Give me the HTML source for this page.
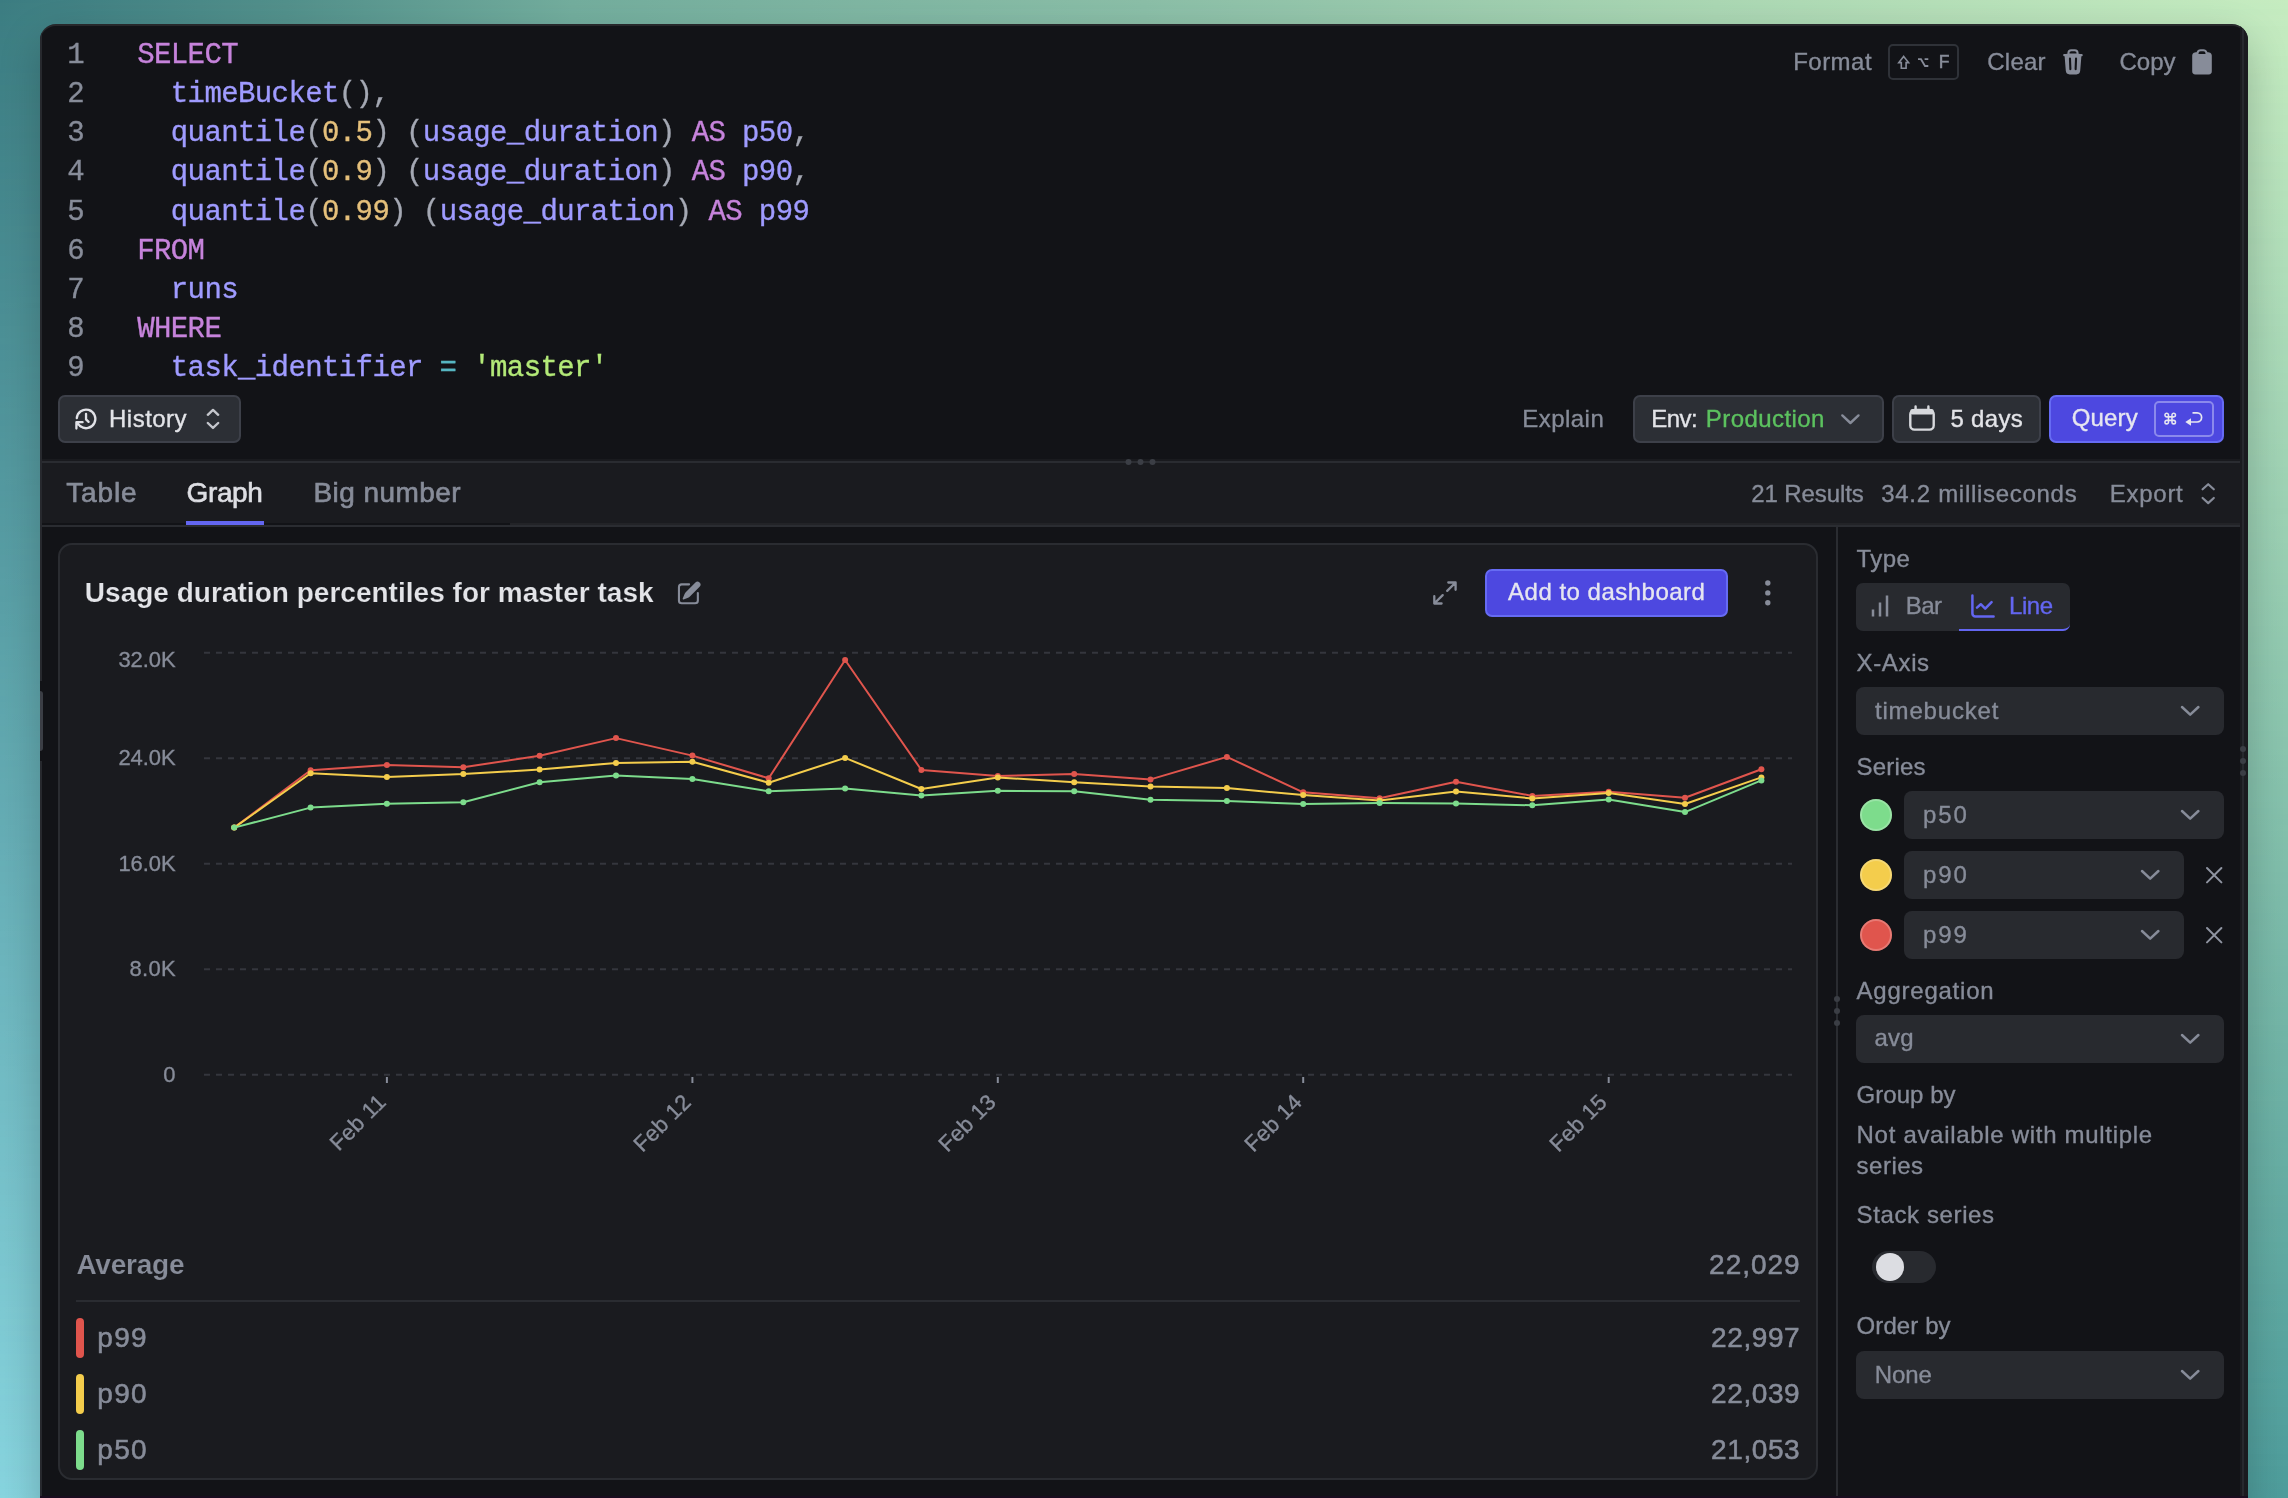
<!DOCTYPE html>
<html><head><meta charset="utf-8"><title>Query</title>
<style>
html,body{margin:0;padding:0}
body{width:2288px;height:1498px;overflow:hidden;position:relative;font-family:'Liberation Sans', sans-serif;background:linear-gradient(to right,#88d5df,#4e9d9c)}
.bgtop{position:absolute;left:0;top:0;width:2288px;height:1498px;background:linear-gradient(to right,#3b7c81,#52908b 12.5%,#73ad9d 25%,#8bbea7 50%,#abd7b3 75%,#c6ecc0);-webkit-mask-image:linear-gradient(to bottom,#000,transparent);mask-image:linear-gradient(to bottom,#000,transparent)}
.win{position:absolute;left:40px;top:24px;width:2208px;height:1500px;background:#121317;border-radius:16px;box-shadow:0 16px 40px rgba(0,0,0,0.22), inset 0 2px 0 rgba(255,255,255,0.09)}
.clip{position:absolute;left:40px;top:24px;width:2208px;height:1474px;border-radius:16px 16px 0 0;overflow:hidden}
.inner{position:absolute;left:-40px;top:-24px;width:2288px;height:1498px;will-change:transform}
.cl{position:absolute;font-family:'Liberation Mono', monospace;font-size:29px;line-height:29px;white-space:pre}
svg{position:absolute;left:0;top:0}
.inner div{-webkit-text-stroke:0.35px currentColor}
</style></head><body>
<div class="bgtop"></div>
<div class="win"></div>
<div class="clip"><div class="inner">
<div style="position:absolute;left:40px;top:24px;width:2px;height:1474px;background:#27292e"></div>
<div style="position:absolute;left:40px;top:681px;width:3px;height:80px;background:#121317"></div>
<div style="position:absolute;left:40px;top:691px;width:3px;height:60px;background:#3b3e45;border-radius:0 3px 3px 0"></div>
<div style="position:absolute;left:2240px;top:24px;width:8px;height:1474px;background:#1a1b1f"></div>
<div style="position:absolute;left:2242px;top:24px;width:2px;height:1474px;background:#27292e"></div>
<div style="position:absolute;left:1888px;top:44px;width:71px;height:36px;border:2px solid #2f3238;border-radius:5px;box-sizing:border-box"></div>
<div style="position:absolute;left:58px;top:395px;width:183px;height:48px;background:#2c2f35;border:2px solid #3d4049;border-radius:7px;box-sizing:border-box"></div>
<div style="position:absolute;left:1633px;top:395px;width:251px;height:48px;background:#2c2f35;border:2px solid #3d4049;border-radius:7px;box-sizing:border-box"></div>
<div style="position:absolute;left:1892px;top:395px;width:149px;height:48px;background:#2c2f35;border:2px solid #3d4049;border-radius:7px;box-sizing:border-box"></div>
<div style="position:absolute;left:2049px;top:395px;width:175px;height:48px;background:#4d48e0;border:2px solid #666bf3;border-radius:7px;box-sizing:border-box"></div>
<div style="position:absolute;left:2154px;top:401px;width:60px;height:36px;border:2px solid #8b89ec;border-radius:5px;box-sizing:border-box"></div>
<div style="position:absolute;left:42px;top:459px;width:2198px;height:2px;background:#191a1e"></div>
<div style="position:absolute;left:42px;top:461px;width:2198px;height:2px;background:#2a2c31"></div>
<div style="position:absolute;left:42px;top:463px;width:2198px;height:60px;background:#1a1b1f"></div>
<div style="position:absolute;left:42px;top:525px;width:2198px;height:2px;background:#2a2c31"></div>
<div style="position:absolute;left:510px;top:523px;width:1730px;height:2px;background:#222327"></div>
<div style="position:absolute;left:186px;top:521px;width:78px;height:4px;background:#6366f1"></div>
<div style="position:absolute;left:58px;top:543px;width:1760px;height:937px;background:#1a1b1f;border:2px solid #2a2c31;border-radius:14px;box-sizing:border-box"></div>
<div style="position:absolute;left:1485px;top:569px;width:243px;height:48px;background:#4d48e0;border:2px solid #666bf3;border-radius:7px;box-sizing:border-box"></div>
<div style="position:absolute;left:76px;top:1300px;width:1724px;height:2px;background:#2a2c31"></div>
<div style="position:absolute;left:76px;top:1318px;width:8px;height:40px;background:#e0554d;border-radius:4px"></div>
<div style="position:absolute;left:76px;top:1374px;width:8px;height:40px;background:#f4cd4c;border-radius:4px"></div>
<div style="position:absolute;left:76px;top:1430px;width:8px;height:40px;background:#7ddc8c;border-radius:4px"></div>
<div style="position:absolute;left:1836px;top:527px;width:2px;height:971px;background:#2a2c31"></div>
<div style="position:absolute;left:1856px;top:583px;width:214px;height:48px;background:#282a2f;border-radius:7px"></div>
<div style="position:absolute;left:1959px;top:583px;width:111px;height:48px;border-bottom:2px solid #6366f1;border-radius:0 0 7px 0;box-sizing:border-box"></div>
<div style="position:absolute;left:1856px;top:687px;width:368px;height:48px;background:#282a2f;border-radius:8px"></div>
<div style="position:absolute;left:1860px;top:799px;width:32px;height:32px;background:#7ddc8c;border-radius:50%;box-shadow:inset 0 0 0 2px rgba(255,255,255,0.22)"></div>
<div style="position:absolute;left:1904px;top:791px;width:320px;height:48px;background:#282a2f;border-radius:8px"></div>
<div style="position:absolute;left:1860px;top:859px;width:32px;height:32px;background:#f4cd4c;border-radius:50%;box-shadow:inset 0 0 0 2px rgba(255,255,255,0.22)"></div>
<div style="position:absolute;left:1904px;top:851px;width:280px;height:48px;background:#282a2f;border-radius:8px"></div>
<div style="position:absolute;left:1860px;top:919px;width:32px;height:32px;background:#e0554d;border-radius:50%;box-shadow:inset 0 0 0 2px rgba(255,255,255,0.22)"></div>
<div style="position:absolute;left:1904px;top:911px;width:280px;height:48px;background:#282a2f;border-radius:8px"></div>
<div style="position:absolute;left:1856px;top:1015px;width:368px;height:48px;background:#282a2f;border-radius:8px"></div>
<div style="position:absolute;left:1872px;top:1251px;width:64px;height:32px;background:#282a2f;border-radius:16px"></div>
<div style="position:absolute;left:1876px;top:1253px;width:28px;height:28px;background:#dcdde2;border-radius:50%"></div>
<div style="position:absolute;left:1856px;top:1351px;width:368px;height:48px;background:#282a2f;border-radius:8px"></div>
<div class="cl" style="top:40.87px;left:137.2px;letter-spacing:-0.603px"><span style="color:#c683db">SELECT</span></div>
<div class="cl" style="top:40.87px;left:67.2px;letter-spacing:-0.603px;color:#878c99">1</div>
<div class="cl" style="top:80.07px;left:137.2px;letter-spacing:-0.603px"><span style="color:#fff">  </span><span style="color:#9f9bff">timeBucket</span><span style="color:#a4a8b3">(),</span></div>
<div class="cl" style="top:80.07px;left:67.2px;letter-spacing:-0.603px;color:#878c99">2</div>
<div class="cl" style="top:119.27px;left:137.2px;letter-spacing:-0.603px"><span style="color:#fff">  </span><span style="color:#9f9bff">quantile</span><span style="color:#a4a8b3">(</span><span style="color:#e5c07b">0.5</span><span style="color:#a4a8b3">) (</span><span style="color:#9f9bff">usage_duration</span><span style="color:#a4a8b3">) </span><span style="color:#c683db">AS</span><span style="color:#fff"> </span><span style="color:#9f9bff">p50</span><span style="color:#a4a8b3">,</span></div>
<div class="cl" style="top:119.27px;left:67.2px;letter-spacing:-0.603px;color:#878c99">3</div>
<div class="cl" style="top:158.47px;left:137.2px;letter-spacing:-0.603px"><span style="color:#fff">  </span><span style="color:#9f9bff">quantile</span><span style="color:#a4a8b3">(</span><span style="color:#e5c07b">0.9</span><span style="color:#a4a8b3">) (</span><span style="color:#9f9bff">usage_duration</span><span style="color:#a4a8b3">) </span><span style="color:#c683db">AS</span><span style="color:#fff"> </span><span style="color:#9f9bff">p90</span><span style="color:#a4a8b3">,</span></div>
<div class="cl" style="top:158.47px;left:67.2px;letter-spacing:-0.603px;color:#878c99">4</div>
<div class="cl" style="top:197.67px;left:137.2px;letter-spacing:-0.603px"><span style="color:#fff">  </span><span style="color:#9f9bff">quantile</span><span style="color:#a4a8b3">(</span><span style="color:#e5c07b">0.99</span><span style="color:#a4a8b3">) (</span><span style="color:#9f9bff">usage_duration</span><span style="color:#a4a8b3">) </span><span style="color:#c683db">AS</span><span style="color:#fff"> </span><span style="color:#9f9bff">p99</span></div>
<div class="cl" style="top:197.67px;left:67.2px;letter-spacing:-0.603px;color:#878c99">5</div>
<div class="cl" style="top:236.87px;left:137.2px;letter-spacing:-0.603px"><span style="color:#c683db">FROM</span></div>
<div class="cl" style="top:236.87px;left:67.2px;letter-spacing:-0.603px;color:#878c99">6</div>
<div class="cl" style="top:276.07px;left:137.2px;letter-spacing:-0.603px"><span style="color:#fff">  </span><span style="color:#9f9bff">runs</span></div>
<div class="cl" style="top:276.07px;left:67.2px;letter-spacing:-0.603px;color:#878c99">7</div>
<div class="cl" style="top:315.27px;left:137.2px;letter-spacing:-0.603px"><span style="color:#c683db">WHERE</span></div>
<div class="cl" style="top:315.27px;left:67.2px;letter-spacing:-0.603px;color:#878c99">8</div>
<div class="cl" style="top:354.47px;left:137.2px;letter-spacing:-0.603px"><span style="color:#fff">  </span><span style="color:#9f9bff">task_identifier</span><span style="color:#fff"> </span><span style="color:#56b6c2">=</span><span style="color:#fff"> </span><span style="color:#b3e978">&#x27;</span><span style="color:#b3e978">master</span><span style="color:#b3e978">&#x27;</span></div>
<div class="cl" style="top:354.47px;left:67.2px;letter-spacing:-0.603px;color:#878c99">9</div>
<div style="position:absolute;top:49.68px;font-family:'Liberation Sans', sans-serif;font-size:24px;font-weight:400;line-height:24px;color:#878c99;white-space:nowrap;letter-spacing:0.477px;left:1793.20px">Format</div>
<div style="position:absolute;top:49.68px;font-family:'Liberation Sans', sans-serif;font-size:24px;font-weight:400;line-height:24px;color:#878c99;white-space:nowrap;letter-spacing:0.235px;left:1987.30px">Clear</div>
<div style="position:absolute;top:49.68px;font-family:'Liberation Sans', sans-serif;font-size:24px;font-weight:400;line-height:24px;color:#878c99;white-space:nowrap;letter-spacing:-0.010px;left:2119.50px">Copy</div>
<div style="position:absolute;top:53.47px;font-family:'Liberation Mono', monospace;font-size:20px;font-weight:400;line-height:20px;color:#878c99;white-space:nowrap;letter-spacing:0.000px;left:1938.30px">F</div>
<div style="position:absolute;top:406.88px;font-family:'Liberation Sans', sans-serif;font-size:24px;font-weight:400;line-height:24px;color:#e3e4e8;white-space:nowrap;letter-spacing:0.488px;left:109.00px">History</div>
<div style="position:absolute;top:406.88px;font-family:'Liberation Sans', sans-serif;font-size:24px;font-weight:400;line-height:24px;color:#878c99;white-space:nowrap;letter-spacing:0.480px;left:1522.20px">Explain</div>
<div style="position:absolute;top:406.88px;font-family:'Liberation Sans', sans-serif;font-size:24px;font-weight:400;line-height:24px;color:#e3e4e8;white-space:nowrap;letter-spacing:-0.544px;left:1651.20px">Env:</div>
<div style="position:absolute;top:406.88px;font-family:'Liberation Sans', sans-serif;font-size:24px;font-weight:400;line-height:24px;color:#5cc25f;white-space:nowrap;letter-spacing:0.428px;left:1705.80px">Production</div>
<div style="position:absolute;top:406.88px;font-family:'Liberation Sans', sans-serif;font-size:24px;font-weight:400;line-height:24px;color:#e3e4e8;white-space:nowrap;letter-spacing:0.296px;left:1950.50px">5 days</div>
<div style="position:absolute;top:406.28px;font-family:'Liberation Sans', sans-serif;font-size:24px;font-weight:400;line-height:24px;color:#e6e6f0;white-space:nowrap;letter-spacing:0.160px;left:2071.70px">Query</div>
<div style="position:absolute;top:479.30px;font-family:'Liberation Sans', sans-serif;font-size:28px;font-weight:400;line-height:28px;color:#878c99;white-space:nowrap;letter-spacing:0.866px;-webkit-text-stroke:0.65px currentColor;left:66.20px">Table</div>
<div style="position:absolute;top:479.30px;font-family:'Liberation Sans', sans-serif;font-size:28px;font-weight:400;line-height:28px;color:#dddee3;white-space:nowrap;letter-spacing:-0.407px;-webkit-text-stroke:0.65px currentColor;left:186.60px">Graph</div>
<div style="position:absolute;top:479.30px;font-family:'Liberation Sans', sans-serif;font-size:28px;font-weight:400;line-height:28px;color:#878c99;white-space:nowrap;letter-spacing:0.446px;-webkit-text-stroke:0.65px currentColor;left:313.40px">Big number</div>
<div style="position:absolute;top:482.18px;font-family:'Liberation Sans', sans-serif;font-size:24px;font-weight:400;line-height:24px;color:#878c99;white-space:nowrap;letter-spacing:-0.099px;left:1751.30px">21 Results</div>
<div style="position:absolute;top:482.18px;font-family:'Liberation Sans', sans-serif;font-size:24px;font-weight:400;line-height:24px;color:#878c99;white-space:nowrap;letter-spacing:0.713px;left:1881.20px">34.2 milliseconds</div>
<div style="position:absolute;top:482.18px;font-family:'Liberation Sans', sans-serif;font-size:24px;font-weight:400;line-height:24px;color:#878c99;white-space:nowrap;letter-spacing:0.725px;left:2109.80px">Export</div>
<div style="position:absolute;top:579.30px;font-family:'Liberation Sans', sans-serif;font-size:28px;font-weight:700;line-height:28px;color:#e3e4e8;white-space:nowrap;letter-spacing:0.020px;-webkit-text-stroke:0.18px #1a1b1f;left:84.80px">Usage duration percentiles for master task</div>
<div style="position:absolute;top:580.48px;font-family:'Liberation Sans', sans-serif;font-size:24px;font-weight:400;line-height:24px;color:#e6e6f0;white-space:nowrap;letter-spacing:0.488px;left:1508.10px">Add to dashboard</div>
<div style="position:absolute;top:648.98px;font-family:'Liberation Sans', sans-serif;font-size:22px;font-weight:400;line-height:22px;color:#878c99;white-space:nowrap;letter-spacing:-0.075px;right:2112.47px">32.0K</div>
<div style="position:absolute;top:747.48px;font-family:'Liberation Sans', sans-serif;font-size:22px;font-weight:400;line-height:22px;color:#878c99;white-space:nowrap;letter-spacing:-0.075px;right:2112.47px">24.0K</div>
<div style="position:absolute;top:852.98px;font-family:'Liberation Sans', sans-serif;font-size:22px;font-weight:400;line-height:22px;color:#878c99;white-space:nowrap;letter-spacing:-0.075px;right:2112.47px">16.0K</div>
<div style="position:absolute;top:958.48px;font-family:'Liberation Sans', sans-serif;font-size:22px;font-weight:400;line-height:22px;color:#878c99;white-space:nowrap;letter-spacing:0.245px;right:2112.16px">8.0K</div>
<div style="position:absolute;top:1063.98px;font-family:'Liberation Sans', sans-serif;font-size:22px;font-weight:400;line-height:22px;color:#878c99;white-space:nowrap;letter-spacing:0.000px;right:2112.40px">0</div>
<div style="position:absolute;top:1250.50px;font-family:'Liberation Sans', sans-serif;font-size:28px;font-weight:700;line-height:28px;color:#878c99;white-space:nowrap;letter-spacing:-0.214px;-webkit-text-stroke:0.15px #1a1b1f;left:76.40px">Average</div>
<div style="position:absolute;top:1250.50px;font-family:'Liberation Sans', sans-serif;font-size:28px;font-weight:400;line-height:28px;color:#878c99;white-space:nowrap;letter-spacing:0.972px;-webkit-text-stroke:0.55px currentColor;right:487.43px">22,029</div>
<div style="position:absolute;top:1324.30px;font-family:'Liberation Sans', sans-serif;font-size:28px;font-weight:400;line-height:28px;color:#878c99;white-space:nowrap;letter-spacing:1.341px;-webkit-text-stroke:0.55px currentColor;left:97.30px">p99</div>
<div style="position:absolute;top:1324.30px;font-family:'Liberation Sans', sans-serif;font-size:28px;font-weight:400;line-height:28px;color:#878c99;white-space:nowrap;letter-spacing:0.572px;-webkit-text-stroke:0.55px currentColor;right:487.83px">22,997</div>
<div style="position:absolute;top:1380.30px;font-family:'Liberation Sans', sans-serif;font-size:28px;font-weight:400;line-height:28px;color:#878c99;white-space:nowrap;letter-spacing:1.341px;-webkit-text-stroke:0.55px currentColor;left:97.30px">p90</div>
<div style="position:absolute;top:1380.30px;font-family:'Liberation Sans', sans-serif;font-size:28px;font-weight:400;line-height:28px;color:#878c99;white-space:nowrap;letter-spacing:0.572px;-webkit-text-stroke:0.55px currentColor;right:487.83px">22,039</div>
<div style="position:absolute;top:1436.30px;font-family:'Liberation Sans', sans-serif;font-size:28px;font-weight:400;line-height:28px;color:#878c99;white-space:nowrap;letter-spacing:1.341px;-webkit-text-stroke:0.55px currentColor;left:97.30px">p50</div>
<div style="position:absolute;top:1436.30px;font-family:'Liberation Sans', sans-serif;font-size:28px;font-weight:400;line-height:28px;color:#878c99;white-space:nowrap;letter-spacing:0.572px;-webkit-text-stroke:0.55px currentColor;right:487.83px">21,053</div>
<div style="position:absolute;top:546.68px;font-family:'Liberation Sans', sans-serif;font-size:24px;font-weight:400;line-height:24px;color:#878c99;white-space:nowrap;letter-spacing:0.390px;left:1856.60px">Type</div>
<div style="position:absolute;top:593.68px;font-family:'Liberation Sans', sans-serif;font-size:24px;font-weight:400;line-height:24px;color:#878c99;white-space:nowrap;letter-spacing:-0.580px;left:1905.80px">Bar</div>
<div style="position:absolute;top:593.68px;font-family:'Liberation Sans', sans-serif;font-size:24px;font-weight:400;line-height:24px;color:#6366f1;white-space:nowrap;letter-spacing:-0.458px;left:2009.00px">Line</div>
<div style="position:absolute;top:650.68px;font-family:'Liberation Sans', sans-serif;font-size:24px;font-weight:400;line-height:24px;color:#878c99;white-space:nowrap;letter-spacing:0.631px;left:1856.60px">X-Axis</div>
<div style="position:absolute;top:698.68px;font-family:'Liberation Sans', sans-serif;font-size:24px;font-weight:400;line-height:24px;color:#878c99;white-space:nowrap;letter-spacing:0.837px;left:1874.90px">timebucket</div>
<div style="position:absolute;top:754.68px;font-family:'Liberation Sans', sans-serif;font-size:24px;font-weight:400;line-height:24px;color:#878c99;white-space:nowrap;letter-spacing:0.194px;left:1856.60px">Series</div>
<div style="position:absolute;top:802.68px;font-family:'Liberation Sans', sans-serif;font-size:24px;font-weight:400;line-height:24px;color:#878c99;white-space:nowrap;letter-spacing:1.977px;left:1922.90px">p50</div>
<div style="position:absolute;top:862.68px;font-family:'Liberation Sans', sans-serif;font-size:24px;font-weight:400;line-height:24px;color:#878c99;white-space:nowrap;letter-spacing:1.977px;left:1922.90px">p90</div>
<div style="position:absolute;top:922.68px;font-family:'Liberation Sans', sans-serif;font-size:24px;font-weight:400;line-height:24px;color:#878c99;white-space:nowrap;letter-spacing:1.977px;left:1922.90px">p99</div>
<div style="position:absolute;top:978.78px;font-family:'Liberation Sans', sans-serif;font-size:24px;font-weight:400;line-height:24px;color:#878c99;white-space:nowrap;letter-spacing:0.756px;left:1856.60px">Aggregation</div>
<div style="position:absolute;top:1025.68px;font-family:'Liberation Sans', sans-serif;font-size:24px;font-weight:400;line-height:24px;color:#878c99;white-space:nowrap;letter-spacing:0.148px;left:1874.60px">avg</div>
<div style="position:absolute;top:1082.78px;font-family:'Liberation Sans', sans-serif;font-size:24px;font-weight:400;line-height:24px;color:#878c99;white-space:nowrap;letter-spacing:0.040px;left:1856.60px">Group by</div>
<div style="position:absolute;top:1122.88px;font-family:'Liberation Sans', sans-serif;font-size:24px;font-weight:400;line-height:24px;color:#878c99;white-space:nowrap;letter-spacing:0.694px;left:1856.60px">Not available with multiple</div>
<div style="position:absolute;top:1153.98px;font-family:'Liberation Sans', sans-serif;font-size:24px;font-weight:400;line-height:24px;color:#878c99;white-space:nowrap;letter-spacing:0.494px;left:1856.60px">series</div>
<div style="position:absolute;top:1202.78px;font-family:'Liberation Sans', sans-serif;font-size:24px;font-weight:400;line-height:24px;color:#878c99;white-space:nowrap;letter-spacing:0.616px;left:1856.60px">Stack series</div>
<div style="position:absolute;top:1314.48px;font-family:'Liberation Sans', sans-serif;font-size:24px;font-weight:400;line-height:24px;color:#878c99;white-space:nowrap;letter-spacing:0.089px;left:1856.60px">Order by</div>
<div style="position:absolute;top:1362.68px;font-family:'Liberation Sans', sans-serif;font-size:24px;font-weight:400;line-height:24px;color:#878c99;white-space:nowrap;letter-spacing:-0.125px;left:1874.80px">None</div>
<div style="position:absolute;left:387.5px;top:1104px;width:0;height:0;transform:rotate(-45deg);transform-origin:0 0"><span style="position:absolute;right:0;top:-18.62px;font-size:22px;line-height:22px;letter-spacing:0.3px;color:#878c99;white-space:nowrap">Feb 11</span></div>
<div style="position:absolute;left:693.0px;top:1104px;width:0;height:0;transform:rotate(-45deg);transform-origin:0 0"><span style="position:absolute;right:0;top:-18.62px;font-size:22px;line-height:22px;letter-spacing:0.3px;color:#878c99;white-space:nowrap">Feb 12</span></div>
<div style="position:absolute;left:998.4px;top:1104px;width:0;height:0;transform:rotate(-45deg);transform-origin:0 0"><span style="position:absolute;right:0;top:-18.62px;font-size:22px;line-height:22px;letter-spacing:0.3px;color:#878c99;white-space:nowrap">Feb 13</span></div>
<div style="position:absolute;left:1303.8px;top:1104px;width:0;height:0;transform:rotate(-45deg);transform-origin:0 0"><span style="position:absolute;right:0;top:-18.62px;font-size:22px;line-height:22px;letter-spacing:0.3px;color:#878c99;white-space:nowrap">Feb 14</span></div>
<div style="position:absolute;left:1609.3px;top:1104px;width:0;height:0;transform:rotate(-45deg);transform-origin:0 0"><span style="position:absolute;right:0;top:-18.62px;font-size:22px;line-height:22px;letter-spacing:0.3px;color:#878c99;white-space:nowrap">Feb 15</span></div>
<svg width="2288" height="1498" viewBox="0 0 2288 1498">
<path d="M1903.7 56.4 L1908.6 62.6 H1906.1 V68.2 H1901.3 V62.6 H1898.8 Z" fill="none" stroke="#878c99" stroke-width="1.6" stroke-linejoin="miter"/>
<path d="M1918 59.2 H1921 L1925 66 H1928.3 M1924.6 59.2 H1928.3" fill="none" stroke="#878c99" stroke-width="1.8"/>
<g transform="translate(2059 47.8) scale(1.4)" fill="#878c99"><path fill-rule="evenodd" clip-rule="evenodd" d="M8.75 1A2.75 2.75 0 0 0 6 3.75v.443c-.795.077-1.584.176-2.365.298a.75.75 0 1 0 .23 1.482l.149-.022.841 10.518A2.75 2.75 0 0 0 7.596 19h4.807a2.75 2.75 0 0 0 2.742-2.53l.841-10.52.149.023a.75.75 0 0 0 .23-1.482A41.03 41.03 0 0 0 14 4.193V3.75A2.75 2.75 0 0 0 11.25 1h-2.5ZM10 4c.84 0 1.673.025 2.5.075V3.75c0-.69-.56-1.25-1.25-1.25h-2.5c-.69 0-1.25.56-1.25 1.25v.325C8.327 4.025 9.16 4 10 4ZM8.58 7.72a.75.75 0 0 0-1.5.06l.3 7.5a.75.75 0 1 0 1.5-.06l-.3-7.5Zm4.34.06a.75.75 0 1 0-1.5-.06l-.3 7.5a.75.75 0 1 0 1.5.06l.3-7.5Z"/></g>
<g transform="translate(2188 47.8) scale(1.4)" fill="#878c99"><path fill-rule="evenodd" clip-rule="evenodd" d="M13.887 3.182c.396.037.79.08 1.183.128C16.194 3.45 17 4.414 17 5.517V16.75A2.25 2.25 0 0 1 14.75 19h-9.5A2.25 2.25 0 0 1 3 16.75V5.517c0-1.103.806-2.068 1.93-2.207.393-.048.787-.09 1.183-.128A3.001 3.001 0 0 1 9 1h2c1.373 0 2.531.923 2.887 2.182ZM7.5 4A1.5 1.5 0 0 1 9 2.5h2A1.5 1.5 0 0 1 12.5 4v.5h-5V4Z"/></g>
<g fill="none" stroke="#e1e2e7" stroke-width="2.3" stroke-linecap="round" stroke-linejoin="round"><path d="M76.8 418.2 A9.3 9.3 0 1 1 80.3 426.2"/><path d="M82.6 422.2 H76.4 V428.6 M76.4 422.2 L80.3 426.2"/><path d="M86.05 413.8 V419.4 L88.6 421.9"/></g>
<path d="M207.8 414.8 L213 409.9 L218.2 414.8 M207.8 423 L213 427.9 L218.2 423" fill="none" stroke="#c4c6cc" stroke-width="2.4" stroke-linecap="round" stroke-linejoin="round"/>
<path d="M1842.3 415.4 L1850.4 423 L1858.5 415.4" fill="none" stroke="#878c99" stroke-width="2.4" stroke-linecap="round" stroke-linejoin="round"/>
<g fill="none" stroke="#d7d9dd" stroke-width="2.4" stroke-linecap="round"><rect x="1910.3" y="410" width="23.4" height="19.6" rx="4.2"/><path d="M1915.6 406.5 V410 M1928.4 406.5 V410"/></g><rect x="1910.3" y="409" width="23.4" height="5.4" rx="2" fill="#d7d9dd"/>
<g transform="translate(2163.2 411.6) scale(0.585)" fill="none" stroke="#e6e6f0" stroke-width="2.6"><path d="M15 6v12a3 3 0 1 0 3-3H6a3 3 0 1 0 3 3V6a3 3 0 1 0-3 3h12a3 3 0 1 0-3-3"/></g>
<path d="M2192.5 412.8 H2197.2 a4.4 4.4 0 0 1 4.4 4.4 V417.6 a4.4 4.4 0 0 1 -4.4 4.4 H2189.5" fill="none" stroke="#e6e6f0" stroke-width="1.7"/><path d="M2185.3 422 L2191 418.3 V425.7 Z" fill="#e6e6f0"/>
<circle cx="1128.5" cy="462" r="3" fill="#3b3e45"/>
<circle cx="1140.5" cy="462" r="3" fill="#3b3e45"/>
<circle cx="1152.5" cy="462" r="3" fill="#3b3e45"/>
<path d="M2202.6 489.3 L2208.2 484.2 L2213.8 489.3 M2202.6 498 L2208.2 503.1 L2213.8 498" fill="none" stroke="#878c99" stroke-width="2.2" stroke-linecap="round" stroke-linejoin="round"/>
<g transform="translate(675.1 579.1) scale(1.4)" fill="#878c99"><path d="m5.433 13.917 1.262-3.155A4 4 0 0 1 7.58 9.42l6.92-6.918a2.121 2.121 0 0 1 3 3l-6.92 6.918c-.383.383-.84.685-1.343.886l-3.154 1.262a.5.5 0 0 1-.65-.65Z"/><path d="M3.5 5.75c0-.69.56-1.25 1.25-1.25H10A.75.75 0 0 0 10 3H4.75A2.75 2.75 0 0 0 2 5.75v9.5A2.75 2.75 0 0 0 4.75 18h9.5A2.75 2.75 0 0 0 17 15.25V10a.75.75 0 0 0-1.5 0v5.25c0 .69-.56 1.25-1.25 1.25h-9.5c-.69 0-1.25-.56-1.25-1.25v-9.5Z"/></g>
<g fill="none" stroke="#878c99" stroke-width="2.3" stroke-linecap="round" stroke-linejoin="round"><path d="M1448.3 582.5 H1455.6 V589.8 M1455.6 582.5 L1447.2 590.9 M1441.6 603.5 H1434.3 V596.2 M1434.3 603.5 L1442.7 595.1"/></g>
<circle cx="1767.8" cy="583" r="2.7" fill="#878c99"/>
<circle cx="1767.8" cy="592.9" r="2.7" fill="#878c99"/>
<circle cx="1767.8" cy="602.7" r="2.7" fill="#878c99"/>
<path d="M204 652.7 H1792" stroke="#34363d" stroke-width="2" stroke-dasharray="6 6" fill="none"/>
<path d="M204 758.2 H1792" stroke="#34363d" stroke-width="2" stroke-dasharray="6 6" fill="none"/>
<path d="M204 863.7 H1792" stroke="#34363d" stroke-width="2" stroke-dasharray="6 6" fill="none"/>
<path d="M204 969.2 H1792" stroke="#34363d" stroke-width="2" stroke-dasharray="6 6" fill="none"/>
<path d="M204 1074.7 H1792" stroke="#34363d" stroke-width="2" stroke-dasharray="6 6" fill="none"/>
<polyline points="234.2,827.6 310.6,770.3 386.9,765.0 463.3,767.2 539.6,755.8 616.0,738.1 692.4,755.6 768.7,778.3 845.1,660.0 921.4,770.0 997.8,776.1 1074.2,774.1 1150.5,779.4 1226.9,756.9 1303.2,792.3 1379.6,798.2 1456.0,781.7 1532.3,795.9 1608.7,791.8 1685.0,797.7 1761.4,769.3" fill="none" stroke="#e0554d" stroke-width="2" stroke-linejoin="round"/>
<circle cx="234.2" cy="827.6" r="3" fill="#e0554d"/>
<circle cx="310.6" cy="770.3" r="3" fill="#e0554d"/>
<circle cx="386.9" cy="765.0" r="3" fill="#e0554d"/>
<circle cx="463.3" cy="767.2" r="3" fill="#e0554d"/>
<circle cx="539.6" cy="755.8" r="3" fill="#e0554d"/>
<circle cx="616.0" cy="738.1" r="3" fill="#e0554d"/>
<circle cx="692.4" cy="755.6" r="3" fill="#e0554d"/>
<circle cx="768.7" cy="778.3" r="3" fill="#e0554d"/>
<circle cx="845.1" cy="660.0" r="3" fill="#e0554d"/>
<circle cx="921.4" cy="770.0" r="3" fill="#e0554d"/>
<circle cx="997.8" cy="776.1" r="3" fill="#e0554d"/>
<circle cx="1074.2" cy="774.1" r="3" fill="#e0554d"/>
<circle cx="1150.5" cy="779.4" r="3" fill="#e0554d"/>
<circle cx="1226.9" cy="756.9" r="3" fill="#e0554d"/>
<circle cx="1303.2" cy="792.3" r="3" fill="#e0554d"/>
<circle cx="1379.6" cy="798.2" r="3" fill="#e0554d"/>
<circle cx="1456.0" cy="781.7" r="3" fill="#e0554d"/>
<circle cx="1532.3" cy="795.9" r="3" fill="#e0554d"/>
<circle cx="1608.7" cy="791.8" r="3" fill="#e0554d"/>
<circle cx="1685.0" cy="797.7" r="3" fill="#e0554d"/>
<circle cx="1761.4" cy="769.3" r="3" fill="#e0554d"/>
<polyline points="234.2,827.6 310.6,773.3 386.9,776.9 463.3,774.1 539.6,769.5 616.0,762.9 692.4,761.7 768.7,782.7 845.1,757.9 921.4,789.0 997.8,777.4 1074.2,782.2 1150.5,786.5 1226.9,788.0 1303.2,795.1 1379.6,800.5 1456.0,791.6 1532.3,798.4 1608.7,792.9 1685.0,804.0 1761.4,777.4" fill="none" stroke="#f4cd4c" stroke-width="2" stroke-linejoin="round"/>
<circle cx="234.2" cy="827.6" r="3" fill="#f4cd4c"/>
<circle cx="310.6" cy="773.3" r="3" fill="#f4cd4c"/>
<circle cx="386.9" cy="776.9" r="3" fill="#f4cd4c"/>
<circle cx="463.3" cy="774.1" r="3" fill="#f4cd4c"/>
<circle cx="539.6" cy="769.5" r="3" fill="#f4cd4c"/>
<circle cx="616.0" cy="762.9" r="3" fill="#f4cd4c"/>
<circle cx="692.4" cy="761.7" r="3" fill="#f4cd4c"/>
<circle cx="768.7" cy="782.7" r="3" fill="#f4cd4c"/>
<circle cx="845.1" cy="757.9" r="3" fill="#f4cd4c"/>
<circle cx="921.4" cy="789.0" r="3" fill="#f4cd4c"/>
<circle cx="997.8" cy="777.4" r="3" fill="#f4cd4c"/>
<circle cx="1074.2" cy="782.2" r="3" fill="#f4cd4c"/>
<circle cx="1150.5" cy="786.5" r="3" fill="#f4cd4c"/>
<circle cx="1226.9" cy="788.0" r="3" fill="#f4cd4c"/>
<circle cx="1303.2" cy="795.1" r="3" fill="#f4cd4c"/>
<circle cx="1379.6" cy="800.5" r="3" fill="#f4cd4c"/>
<circle cx="1456.0" cy="791.6" r="3" fill="#f4cd4c"/>
<circle cx="1532.3" cy="798.4" r="3" fill="#f4cd4c"/>
<circle cx="1608.7" cy="792.9" r="3" fill="#f4cd4c"/>
<circle cx="1685.0" cy="804.0" r="3" fill="#f4cd4c"/>
<circle cx="1761.4" cy="777.4" r="3" fill="#f4cd4c"/>
<polyline points="234.2,827.6 310.6,807.6 386.9,803.8 463.3,802.2 539.6,782.2 616.0,775.4 692.4,778.9 768.7,791.3 845.1,788.5 921.4,795.4 997.8,790.8 1074.2,791.3 1150.5,799.7 1226.9,801.0 1303.2,804.0 1379.6,803.0 1456.0,803.5 1532.3,805.3 1608.7,799.4 1685.0,812.1 1761.4,780.4" fill="none" stroke="#7ddc8c" stroke-width="2" stroke-linejoin="round"/>
<circle cx="234.2" cy="827.6" r="3" fill="#7ddc8c"/>
<circle cx="310.6" cy="807.6" r="3" fill="#7ddc8c"/>
<circle cx="386.9" cy="803.8" r="3" fill="#7ddc8c"/>
<circle cx="463.3" cy="802.2" r="3" fill="#7ddc8c"/>
<circle cx="539.6" cy="782.2" r="3" fill="#7ddc8c"/>
<circle cx="616.0" cy="775.4" r="3" fill="#7ddc8c"/>
<circle cx="692.4" cy="778.9" r="3" fill="#7ddc8c"/>
<circle cx="768.7" cy="791.3" r="3" fill="#7ddc8c"/>
<circle cx="845.1" cy="788.5" r="3" fill="#7ddc8c"/>
<circle cx="921.4" cy="795.4" r="3" fill="#7ddc8c"/>
<circle cx="997.8" cy="790.8" r="3" fill="#7ddc8c"/>
<circle cx="1074.2" cy="791.3" r="3" fill="#7ddc8c"/>
<circle cx="1150.5" cy="799.7" r="3" fill="#7ddc8c"/>
<circle cx="1226.9" cy="801.0" r="3" fill="#7ddc8c"/>
<circle cx="1303.2" cy="804.0" r="3" fill="#7ddc8c"/>
<circle cx="1379.6" cy="803.0" r="3" fill="#7ddc8c"/>
<circle cx="1456.0" cy="803.5" r="3" fill="#7ddc8c"/>
<circle cx="1532.3" cy="805.3" r="3" fill="#7ddc8c"/>
<circle cx="1608.7" cy="799.4" r="3" fill="#7ddc8c"/>
<circle cx="1685.0" cy="812.1" r="3" fill="#7ddc8c"/>
<circle cx="1761.4" cy="780.4" r="3" fill="#7ddc8c"/>
<path d="M386.9 1077 V1083" stroke="#878c99" stroke-width="2"/>
<path d="M692.4 1077 V1083" stroke="#878c99" stroke-width="2"/>
<path d="M997.8 1077 V1083" stroke="#878c99" stroke-width="2"/>
<path d="M1303.2 1077 V1083" stroke="#878c99" stroke-width="2"/>
<path d="M1608.7 1077 V1083" stroke="#878c99" stroke-width="2"/>
<circle cx="1837" cy="999" r="3" fill="#3b3e45"/>
<circle cx="1837" cy="1011" r="3" fill="#3b3e45"/>
<circle cx="1837" cy="1023" r="3" fill="#3b3e45"/>
<path d="M1873 609.4 V616.6 M1880 602.4 V616.6 M1887 595.4 V616.6" stroke="#878c99" stroke-width="2.5" stroke-linecap="butt" fill="none"/>
<path d="M1972.4 595.4 V613.4 a3 3 0 0 0 3 3 H1993.6 M1977 607.6 L1980.8 604.2 L1985.2 608.6 L1991.6 602.2" fill="none" stroke="#6366f1" stroke-width="2.5" stroke-linecap="round" stroke-linejoin="round"/>
<path d="M2182 707 L2190.2 714.6 L2198.4 707" fill="none" stroke="#878c99" stroke-width="2.5" stroke-linecap="round" stroke-linejoin="round"/>
<path d="M2182 811 L2190.2 818.6 L2198.4 811" fill="none" stroke="#878c99" stroke-width="2.5" stroke-linecap="round" stroke-linejoin="round"/>
<path d="M2142 871 L2150.2 878.6 L2158.4 871" fill="none" stroke="#878c99" stroke-width="2.5" stroke-linecap="round" stroke-linejoin="round"/>
<path d="M2207 868 L2221.4 882.4 M2221.4 868 L2207 882.4" stroke="#8f94a1" stroke-width="2" stroke-linecap="round"/>
<path d="M2142 931 L2150.2 938.6 L2158.4 931" fill="none" stroke="#878c99" stroke-width="2.5" stroke-linecap="round" stroke-linejoin="round"/>
<path d="M2207 928 L2221.4 942.4 M2221.4 928 L2207 942.4" stroke="#8f94a1" stroke-width="2" stroke-linecap="round"/>
<path d="M2182 1035 L2190.2 1042.6 L2198.4 1035" fill="none" stroke="#878c99" stroke-width="2.5" stroke-linecap="round" stroke-linejoin="round"/>
<path d="M2182 1371 L2190.2 1378.6 L2198.4 1371" fill="none" stroke="#878c99" stroke-width="2.5" stroke-linecap="round" stroke-linejoin="round"/>
<circle cx="2243" cy="749" r="3" fill="#3b3e45"/><circle cx="2243" cy="761" r="3" fill="#3b3e45"/><circle cx="2243" cy="773" r="3" fill="#3b3e45"/>
</svg>
<div style="position:absolute;left:40px;top:1496px;width:2208px;height:2px;background:#190d1f"></div>
</div></div>
</body></html>
